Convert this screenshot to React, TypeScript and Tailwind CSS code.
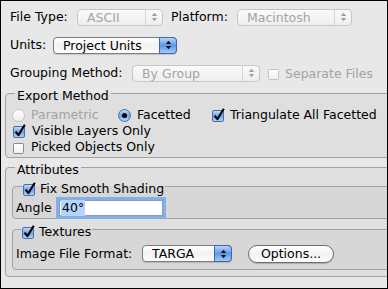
import React from 'react';

const font = { fontFamily: '"DejaVu Sans", "Liberation Sans", sans-serif' };

function Arrows({ color }: { color: string }) {
  return (
    <svg width="7" height="10" viewBox="0 0 7 10">
      <path d="M3.5 0.8L6.2 4H0.8z" fill={color} />
      <path d="M3.5 9.2L0.8 6h5.4z" fill={color} />
    </svg>
  );
}

function Popup({ label, className, disabled }: { label: string; className: string; disabled?: boolean }) {
  return (
    <div
      className={`flex h-[17px] items-stretch rounded-[4px] border ${className} ${
        disabled
          ? 'border-[#c6c6c6] bg-gradient-to-b from-[#fafafa] to-[#efefef] text-[#a3a3a3]'
          : 'border-[#7c7c7c] bg-gradient-to-b from-white via-[#f2f2f2] to-[#fdfdfd] text-black shadow-[0_1px_1px_rgba(0,0,0,0.15)]'
      }`}
    >
      <span className="flex-1 truncate pl-[9px] leading-[15px]">{label}</span>
      {disabled ? (
        <span className="flex w-[17px] items-center justify-center border-l border-[#d4d4d4]">
          <Arrows color="#a0a0a0" />
        </span>
      ) : (
        <span className="-my-px -mr-px flex w-[18px] items-center justify-center rounded-r-[4px] border border-[#3d67b0] bg-gradient-to-b from-[#b9d5f7] via-[#5c97e6] to-[#a4cbf5]">
          <Arrows color="#111" />
        </span>
      )}
    </div>
  );
}

function Check({ checked, disabled }: { checked?: boolean; disabled?: boolean }) {
  if (checked) {
    return (
      <svg width="14" height="14" viewBox="0 0 14 14" className="shrink-0">
        <defs>
          <linearGradient id="cb" x1="0" y1="0" x2="0" y2="1">
            <stop offset="0" stopColor="#c3dcf8" />
            <stop offset="0.5" stopColor="#6ea4ea" />
            <stop offset="1" stopColor="#b7d6f7" />
          </linearGradient>
        </defs>
        <rect x="0.5" y="2.5" width="11" height="11" rx="1.5" fill="url(#cb)" stroke="#4a6ea8" />
        <path d="M2.6 7.6L5.4 11.2L11.8 0.8" fill="none" stroke="#000" strokeWidth="2.1" strokeLinejoin="round" />
      </svg>
    );
  }
  return (
    <span
      className={`mt-[2px] block h-[11px] w-[11px] shrink-0 rounded-[1.5px] border bg-gradient-to-b from-white to-[#f0f0f0] ${
        disabled ? 'border-[#c2c2c2]' : 'border-[#8a8a8a]'
      }`}
    />
  );
}

function Radio({ on, disabled }: { on?: boolean; disabled?: boolean }) {
  if (on) {
    return (
      <span className="flex h-[13px] w-[13px] shrink-0 items-center justify-center rounded-full border border-[#4a6ea8] bg-gradient-to-b from-[#c3dcf8] via-[#6ea4ea] to-[#b7d6f7]">
        <span className="h-[5px] w-[5px] rounded-full bg-black" />
      </span>
    );
  }
  return (
    <span
      className={`block h-[13px] w-[13px] shrink-0 rounded-full border bg-gradient-to-b from-white to-[#eeeeee] ${
        disabled ? 'border-[#c4c4c4]' : 'border-[#8a8a8a]'
      }`}
    />
  );
}

export default function App() {
  return (
    <div
      style={font}
      className="h-[289px] w-[388px] overflow-hidden border border-black bg-[#e8e8e8] text-[12.5px] leading-[16px] text-black"
    >
      {/* top rows */}
      <div className="flex flex-col gap-[12px] pt-[8px] pl-[9px]">
        <div className="flex h-[16px] items-center">
          <span className="w-[67px]">File Type:</span>
          <Popup label="ASCII" className="w-[86px]" disabled />
          <span className="ml-[8px] w-[66px]">Platform:</span>
          <Popup label="Macintosh" className="w-[115px]" disabled />
        </div>
        <div className="flex h-[16px] items-center">
          <span className="w-[43px]">Units:</span>
          <Popup label="Project Units" className="w-[124px]" />
        </div>
        <div className="flex h-[16px] items-center">
          <span className="w-[122px]">Grouping Method:</span>
          <Popup label="By Group" className="w-[128px]" disabled />
          <span className="ml-[8px] flex items-center gap-[6px] text-[#a3a3a3]">
            <Check disabled />
            <span className="pt-[1px]">Separate Files</span>
          </span>
        </div>
      </div>

      {/* Export Method */}
      <fieldset className="mt-[4px] ml-[4px] -mr-[20px] rounded-[4px] border border-[#a2a2a2] bg-black/[0.035] pt-[5px] pb-[2px] pl-[6px]">
        <legend className="ml-[3px] px-[2px] pt-[5px] leading-[12px]">Export Method</legend>
        <div className="flex h-[16px] items-center">
          <span className="flex w-[106px] items-center gap-[6px] text-[#a3a3a3]">
            <Radio disabled />
            Parametric
          </span>
          <span className="flex w-[94px] items-center gap-[6px]">
            <Radio on />
            Facetted
          </span>
          <span className="flex items-center gap-[4px]">
            <Check checked />
            Triangulate All Facetted
          </span>
        </div>
        <div className="flex h-[16px] items-center gap-[5px] pl-[1px]">
          <Check checked />
          Visible Layers Only
        </div>
        <div className="flex h-[16px] items-center gap-[7px] pl-[1px]">
          <Check />
          Picked Objects Only
        </div>
      </fieldset>

      {/* Attributes */}
      <fieldset className="mt-[1px] ml-[4px] -mr-[20px] rounded-[4px] border border-[#a2a2a2] bg-black/[0.035] pb-[6px] pl-[6px]">
        <legend className="ml-[3px] px-[2px] pt-[5px] leading-[12px]">Attributes</legend>

        <fieldset className="mt-[1px] rounded-[4px] border border-[#a2a2a2] bg-black/[0.035] pb-[0px] pl-[3px]">
          <legend className="ml-[6px] flex items-center gap-[3px] px-[1px] pt-[5px] leading-[12px]">
            <Check checked />
            Fix Smooth Shading
          </legend>
          <div className="flex h-[22px] items-center pt-[1px]">
            <span className="w-[43px]">Angle</span>
            <div className="flex h-[16px] w-[104px] items-center border border-[#7f9fd0] bg-white pl-[1px] ring-[3px] ring-[#86aee6]">
              <span className="bg-[#b5d5ff] px-[1px]">40°</span>
            </div>
          </div>
        </fieldset>

        <fieldset className="mt-[1px] rounded-[4px] border border-[#a2a2a2] bg-black/[0.035] pb-[12px] pl-[3px]">
          <legend className="ml-[5px] flex items-center gap-[3px] px-[1px] pt-[5px] leading-[12px]">
            <Check checked />
            Textures
          </legend>
          <div className="flex h-[18px] items-center pt-[11px]">
            <span className="w-[126px]">Image File Format:</span>
            <Popup label="TARGA" className="w-[90px]" />
            <button className="ml-[16px] h-[18px] w-[86px] rounded-full border border-[#6f6f6f] bg-gradient-to-b from-white via-[#f3f3f3] to-[#fcfcfc] leading-[16px] shadow-[0_1px_1px_rgba(0,0,0,0.2)]">
              Options...
            </button>
          </div>
        </fieldset>
      </fieldset>
    </div>
  );
}
